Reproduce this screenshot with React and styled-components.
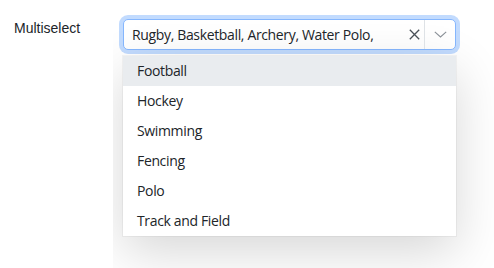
import styled, { createGlobalStyle } from "styled-components";

const options = ["Football", "Hockey", "Swimming", "Fencing", "Polo", "Track and Field"];

const GlobalStyle = createGlobalStyle`
    body {
        margin: 0;
        background: #fff;
        font-family: "Open Sans", "Noto Sans", sans-serif;
        color: #212529;
    }
`;

const App = () => {
    return (
        <>
            <GlobalStyle />
            <Row>
                <Label>Multiselect</Label>
                <FieldArea>
                    <Field>
                        <Control>
                            <Value>Rugby, Basketball, Archery, Water Polo,</Value>
                            <ClearButton aria-label="clear">
                                <svg width="11" height="11" viewBox="0 0 11 11">
                                    <path d="M0.8 0.8L10.2 10.2M10.2 0.8L0.8 10.2" stroke="#495057" strokeWidth="1.3" fill="none" />
                                </svg>
                            </ClearButton>
                            <Divider />
                            <Toggle aria-label="open">
                                <svg width="13" height="7" viewBox="0 0 13 7">
                                    <path d="M0.8 0.8L6.5 6L12.2 0.8" stroke="#8a9097" strokeWidth="1.1" fill="none" />
                                </svg>
                            </Toggle>
                        </Control>
                        <Menu>
                            {options.map((opt, i) => (
                                <Option key={opt} $active={i === 0}>
                                    {opt}
                                </Option>
                            ))}
                        </Menu>
                    </Field>
                </FieldArea>
            </Row>
        </>
    );
};

export default App;

const Row = styled.div`
    display: flex;
    height: 268px;
    padding-left: 14px;
`;

const Label = styled.div`
    width: 99px;
    padding-top: 20px;
    font-family: "Liberation Sans", Arial, sans-serif;
    font-size: 14px;
    color: #212529;
`;

const FieldArea = styled.div`
    flex: 1;
    overflow: hidden;
    padding: 19px 0 0 10px;
`;

const Field = styled.div`
    width: 333px;
`;

const Control = styled.div`
    display: flex;
    align-items: center;
    height: 31px;
    border: 1px solid #86b7fe;
    border-radius: 5px;
    box-shadow: 0 0 0 4px rgba(13, 110, 253, 0.25);
    background: #fff;
    box-sizing: border-box;
`;

const Value = styled.div`
    flex: 1;
    padding-left: 8px;
    font-size: 14px;
    letter-spacing: -0.35px;
    white-space: nowrap;
    overflow: hidden;
`;

const ClearButton = styled.button`
    display: flex;
    align-items: center;
    justify-content: center;
    width: 20px;
    height: 100%;
    padding: 0;
    border: none;
    background: none;
`;

const Divider = styled.span`
    align-self: stretch;
    width: 1px;
    background: #dee2e6;
`;

const Toggle = styled.button`
    display: flex;
    align-items: center;
    justify-content: center;
    width: 30px;
    height: 100%;
    padding: 0;
    border: none;
    background: none;
`;

const Menu = styled.div`
    margin-top: 6px;
    background: #fff;
    box-shadow: 0 0 0 1px rgba(0, 0, 0, 0.04), 0 16px 48px rgba(0, 0, 0, 0.16);
`;

const Option = styled.div`
    height: 30px;
    line-height: 30px;
    padding-left: 14px;
    font-size: 14px;
    letter-spacing: -0.35px;
    background: ${(p) => (p.$active ? "#e9ecef" : "#fff")};
`;
